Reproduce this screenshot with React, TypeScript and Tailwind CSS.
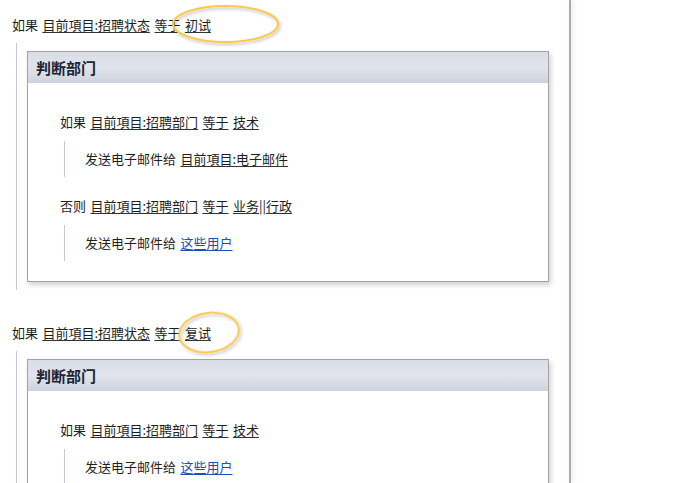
import React from "react";

const font = { fontFamily: '"Noto Sans CJK SC", "Noto Sans", sans-serif' };

function L({ children, blue }: { children: React.ReactNode; blue?: boolean }) {
  return (
    <span className={blue ? "underline text-[#1c4fb4] decoration-[#1c4fb4]" : "underline decoration-[#333]"} style={{ textUnderlineOffset: "2px" }}>
      {children}
    </span>
  );
}

function Row({ children }: { children: React.ReactNode }) {
  return <div className="h-5 leading-5 whitespace-nowrap [word-spacing:1.5px]">{children}</div>;
}

function Sub({ children }: { children: React.ReactNode }) {
  return (
    <div className="ml-1 border-l border-[#c6c6d6] pl-5 py-2">
      <Row>{children}</Row>
    </div>
  );
}

function Card({ children }: { children: React.ReactNode }) {
  return (
    <div className="w-[522px] border border-[#a3a3a3] bg-white shadow-[2px_3px_5px_rgba(0,0,0,0.18)]">
      <div className="h-[31px] bg-gradient-to-b from-[#d9dde6] via-[#e1e4eb] to-[#cdd2dc] pl-2 leading-[31px] text-[15px] font-bold text-[#1b2433]">
        判断部门
      </div>
      <div className="pl-8 pt-[29px] pb-5">{children}</div>
    </div>
  );
}

function Ellipse({ left, top, w, h, rot }: { left: number; top: number; w: number; h: number; rot: number }) {
  return (
    <svg className="absolute pointer-events-none" style={{ left: left - 6, top: top - 6 }} width={w + 14} height={h + 14}>
      <defs>
        <filter id={`s${left}`} x="-20%" y="-20%" width="140%" height="140%">
          <feDropShadow dx="1.5" dy="2" stdDeviation="1.5" floodColor="#000" floodOpacity="0.25" />
        </filter>
      </defs>
      <ellipse
        cx={w / 2 + 6}
        cy={h / 2 + 6}
        rx={w / 2 - 1}
        ry={h / 2 - 1}
        fill="none"
        stroke="#fcc94c"
        strokeWidth="2"
        filter={`url(#s${left})`}
        transform={`rotate(${rot} ${w / 2 + 6} ${h / 2 + 6})`}
      />
    </svg>
  );
}

export default function App() {
  return (
    <div className="relative w-[688px] h-[483px] overflow-hidden bg-white text-[13px] text-[#1e1e1e]" style={font}>
      <div className="flex h-full">
        <div className="w-[569px] pl-3 pt-[15px]">
          <Row>
            如果 <L>目前項目:招聘状态</L> <L>等于</L> <L>初试</L>
          </Row>
          <div className="ml-1 mt-2 border-l border-[#c6c6d6] pl-[10px] py-2">
            <Card>
              <Row>
                如果 <L>目前項目:招聘部门</L> <L>等于</L> <L>技术</L>
              </Row>
              <div className="mt-[9px]">
                <Sub>
                  发送电子邮件给 <L>目前項目:电子邮件</L>
                </Sub>
              </div>
              <div className="mt-[19px]">
                <Row>
                  否则 <L>目前項目:招聘部门</L> <L>等于</L> <L>业务||行政</L>
                </Row>
              </div>
              <div className="mt-[9px]">
                <Sub>
                  发送电子邮件给 <L blue>这些用户</L>
                </Sub>
              </div>
            </Card>
          </div>
          <div className="mt-[33px]">
            <Row>
              如果 <L>目前項目:招聘状态</L> <L>等于</L> <L>复试</L>
            </Row>
          </div>
          <div className="ml-1 mt-2 border-l border-[#c6c6d6] pl-[10px] py-2">
            <Card>
              <Row>
                如果 <L>目前項目:招聘部门</L> <L>等于</L> <L>技术</L>
              </Row>
              <div className="mt-[9px]">
                <Sub>
                  发送电子邮件给 <L blue>这些用户</L>
                </Sub>
              </div>
            </Card>
          </div>
        </div>
        <div className="w-[2px] h-full bg-[#ababab] shadow-[2px_0_4px_rgba(0,0,0,0.12)]" />
        <div className="flex-1" />
      </div>
      <Ellipse left={172} top={5} w={107} h={38} rot={0} />
      <Ellipse left={178} top={312} w={62} h={41} rot={-8} />
    </div>
  );
}
